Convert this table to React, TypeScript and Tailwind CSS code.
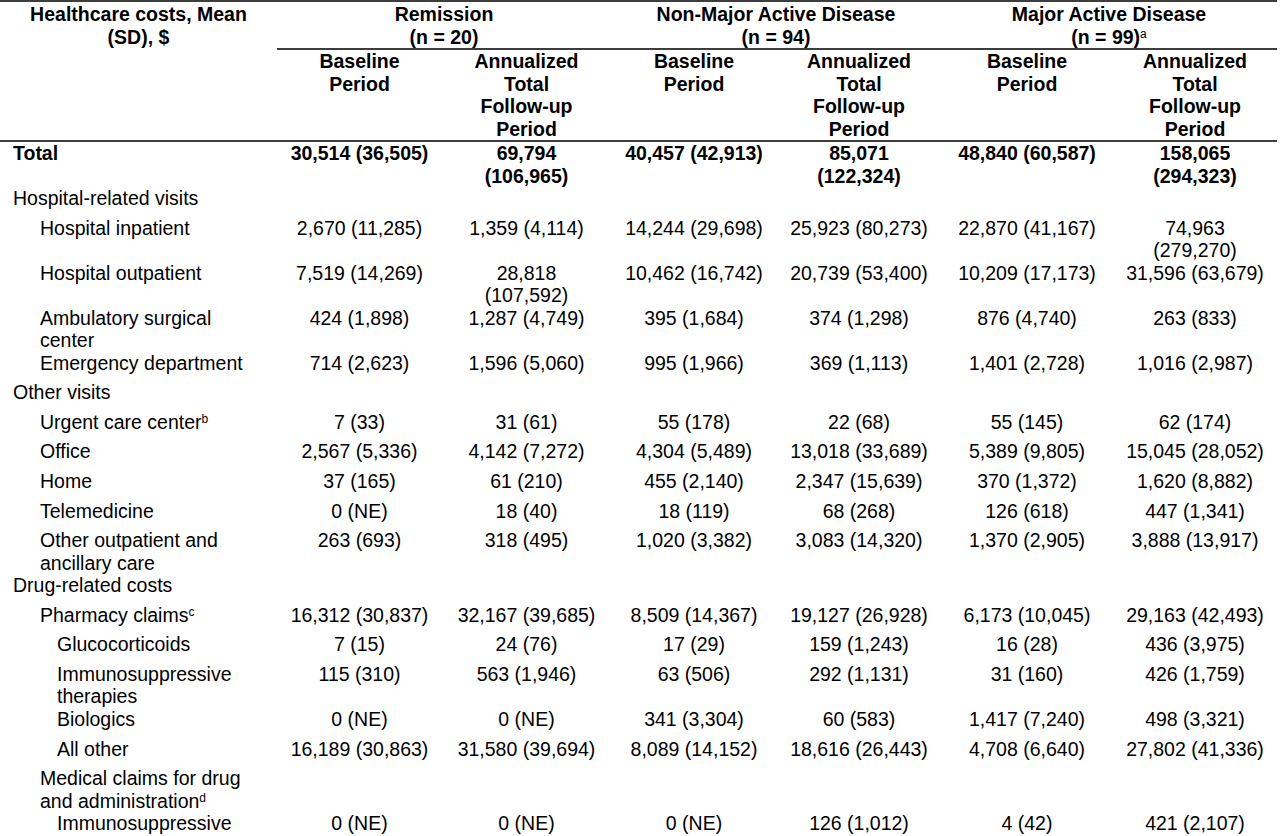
import React from "react";

interface RowData {
  label: string;
  sup?: string;
  level: 0 | 1 | 2;
  vals?: string[];
  bold?: boolean;
}

const colWidths = [
  "w-[277px]",
  "w-[165px]",
  "w-[169px]",
  "w-[166px]",
  "w-[164px]",
  "w-[172px]",
  "w-[164px]",
];

const indent = ["pl-[13px]", "pl-[40px]", "pl-[57px]"];

const rows: RowData[] = [
  {
    label: "Total",
    level: 0,
    bold: true,
    vals: [
      "30,514 (36,505)",
      "69,794\n(106,965)",
      "40,457 (42,913)",
      "85,071\n(122,324)",
      "48,840 (60,587)",
      "158,065\n(294,323)",
    ],
  },
  { label: "Hospital-related visits", level: 0 },
  {
    label: "Hospital inpatient",
    level: 1,
    vals: [
      "2,670 (11,285)",
      "1,359 (4,114)",
      "14,244 (29,698)",
      "25,923 (80,273)",
      "22,870 (41,167)",
      "74,963\n(279,270)",
    ],
  },
  {
    label: "Hospital outpatient",
    level: 1,
    vals: [
      "7,519 (14,269)",
      "28,818\n(107,592)",
      "10,462 (16,742)",
      "20,739 (53,400)",
      "10,209 (17,173)",
      "31,596 (63,679)",
    ],
  },
  {
    label: "Ambulatory surgical\ncenter",
    level: 1,
    vals: ["424 (1,898)", "1,287 (4,749)", "395 (1,684)", "374 (1,298)", "876 (4,740)", "263 (833)"],
  },
  {
    label: "Emergency department",
    level: 1,
    vals: ["714 (2,623)", "1,596 (5,060)", "995 (1,966)", "369 (1,113)", "1,401 (2,728)", "1,016 (2,987)"],
  },
  { label: "Other visits", level: 0 },
  {
    label: "Urgent care center",
    sup: "b",
    level: 1,
    vals: ["7 (33)", "31 (61)", "55 (178)", "22 (68)", "55 (145)", "62 (174)"],
  },
  {
    label: "Office",
    level: 1,
    vals: [
      "2,567 (5,336)",
      "4,142 (7,272)",
      "4,304 (5,489)",
      "13,018 (33,689)",
      "5,389 (9,805)",
      "15,045 (28,052)",
    ],
  },
  {
    label: "Home",
    level: 1,
    vals: ["37 (165)", "61 (210)", "455 (2,140)", "2,347 (15,639)", "370 (1,372)", "1,620 (8,882)"],
  },
  {
    label: "Telemedicine",
    level: 1,
    vals: ["0 (NE)", "18 (40)", "18 (119)", "68 (268)", "126 (618)", "447 (1,341)"],
  },
  {
    label: "Other outpatient and\nancillary care",
    level: 1,
    vals: [
      "263 (693)",
      "318 (495)",
      "1,020 (3,382)",
      "3,083 (14,320)",
      "1,370 (2,905)",
      "3,888 (13,917)",
    ],
  },
  { label: "Drug-related costs", level: 0 },
  {
    label: "Pharmacy claims",
    sup: "c",
    level: 1,
    vals: [
      "16,312 (30,837)",
      "32,167 (39,685)",
      "8,509 (14,367)",
      "19,127 (26,928)",
      "6,173 (10,045)",
      "29,163 (42,493)",
    ],
  },
  {
    label: "Glucocorticoids",
    level: 2,
    vals: ["7 (15)", "24 (76)", "17 (29)", "159 (1,243)", "16 (28)", "436 (3,975)"],
  },
  {
    label: "Immunosuppressive\ntherapies",
    level: 2,
    vals: ["115 (310)", "563 (1,946)", "63 (506)", "292 (1,131)", "31 (160)", "426 (1,759)"],
  },
  {
    label: "Biologics",
    level: 2,
    vals: ["0 (NE)", "0 (NE)", "341 (3,304)", "60 (583)", "1,417 (7,240)", "498 (3,321)"],
  },
  {
    label: "All other",
    level: 2,
    vals: [
      "16,189 (30,863)",
      "31,580 (39,694)",
      "8,089 (14,152)",
      "18,616 (26,443)",
      "4,708 (6,640)",
      "27,802 (41,336)",
    ],
  },
  { label: "Medical claims for drug\nand administration", sup: "d", level: 1 },
  {
    label: "Immunosuppressive",
    level: 2,
    vals: ["0 (NE)", "0 (NE)", "0 (NE)", "126 (1,012)", "4 (42)", "421 (2,107)"],
  },
];

const groups = [
  { name: "Remission", n: "(n = 20)" },
  { name: "Non-Major Active Disease", n: "(n = 94)" },
  { name: "Major Active Disease", n: "(n = 99)", sup: "a" },
];

function SubHeaders() {
  const cells = [];
  for (let i = 0; i < 3; i++) {
    cells.push(
      <th key={`b${i}`} className="border-b-2 border-[#3d3d3d] p-0 align-top font-bold">
        Baseline
        <br />
        Period
      </th>
    );
    cells.push(
      <th key={`a${i}`} className="border-b-2 border-[#3d3d3d] p-0 align-top font-bold">
        Annualized
        <br />
        Total
        <br />
        Follow-up
        <br />
        Period
      </th>
    );
  }
  return <tr>{cells}</tr>;
}

export default function App() {
  return (
    <div className="h-[836px] w-[1280px] overflow-hidden bg-white font-['Liberation_Sans',Arial,sans-serif] text-[19.5px] leading-[22.5px] text-black">
      <table className="w-[1277px] table-fixed border-separate border-spacing-0">
        <colgroup>
          {colWidths.map((w, i) => (
            <col key={i} className={w} />
          ))}
        </colgroup>
        <thead>
          <tr>
            <th
              rowSpan={2}
              className="border-y-2 border-[#3d3d3d] p-0 pt-px align-top font-bold"
            >
              Healthcare costs, Mean
              <br />
              (SD), $
            </th>
            {groups.map((g) => (
              <th
                key={g.name}
                colSpan={2}
                className="border-y-2 border-[#3d3d3d] p-0 pt-px align-top font-bold"
              >
                {g.name}
                <br />
                {g.n}
                {g.sup && <sup className="text-[12px] font-normal">{g.sup}</sup>}
              </th>
            ))}
          </tr>
          <SubHeaders />
        </thead>
        <tbody>
          {rows.map((r) => (
            <tr key={r.label + r.level}>
              <td
                className={`h-[29.6px] whitespace-pre-line p-0 pr-[7px] align-top ${indent[r.level]} ${
                  r.bold ? "font-bold" : ""
                }`}
              >
                {r.label}
                {r.sup && <sup className="text-[12px]">{r.sup}</sup>}
              </td>
              {(r.vals ?? ["", "", "", "", "", ""]).map((v, i) => (
                <td
                  key={i}
                  className={`h-[29.6px] whitespace-pre-line p-0 text-center align-top ${
                    r.bold ? "font-bold" : ""
                  }`}
                >
                  {v}
                </td>
              ))}
            </tr>
          ))}
        </tbody>
      </table>
    </div>
  );
}
